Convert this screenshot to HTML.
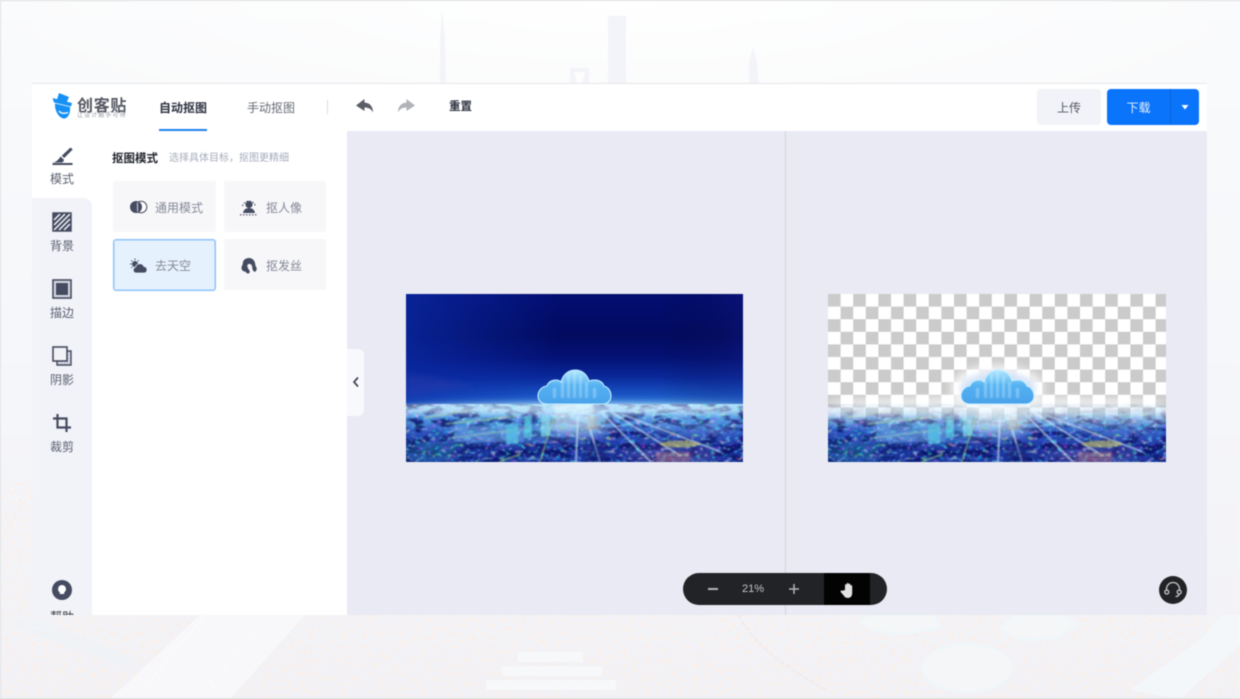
<!DOCTYPE html>
<html lang="zh-CN">
<head>
<meta charset="utf-8">
<title>创客贴 抠图</title>
<style>
*{box-sizing:border-box;margin:0;padding:0}
html,body{width:1240px;height:699px;overflow:hidden;background:#f8f8fb}
body{font-family:"Liberation Sans","Noto Sans CJK SC",sans-serif;position:relative}
#wrap{position:absolute;left:0;top:0;width:1240px;height:699px;filter:blur(.45px);overflow:hidden}
.a{position:absolute}
.t{position:absolute;white-space:nowrap;line-height:16px}
svg{position:absolute;overflow:visible}
svg.img{overflow:hidden}
#app{position:absolute;left:32px;top:84px;width:1175px;height:531px;overflow:hidden;background:#e9eaf3}
.lab{position:absolute;left:0;width:60px;text-align:center;font-size:12px;line-height:16px;color:#5a5f70}
.card{position:absolute;background:#f7f7fa;border-radius:2px}
.card span{position:absolute;left:42px;top:19px;font-size:12px;line-height:16px;color:#858998;white-space:nowrap}
</style>
</head>
<body>
<div id="wrap">

<!-- page background -->
<svg style="left:0;top:0" width="1240" height="699" viewBox="0 0 1240 699">
  <defs>
    <linearGradient id="bgv" x1="0" y1="0" x2="0" y2="1">
      <stop offset="0" stop-color="#fafbfc"/><stop offset=".5" stop-color="#f6f7fa"/><stop offset="1" stop-color="#f2f2f6"/>
    </linearGradient>
    <radialGradient id="bgc" cx=".5" cy="0" r=".55">
      <stop offset="0" stop-color="#ffffff"/><stop offset="1" stop-color="#ffffff" stop-opacity="0"/>
    </radialGradient>
    <filter id="sp" x="0" y="0" width="100%" height="100%" color-interpolation-filters="sRGB">
      <feTurbulence type="fractalNoise" baseFrequency=".22" numOctaves="2" seed="5"/>
      <feColorMatrix values="0 0 0 0 1  0 0 0 0 .93  0 0 0 0 .88  0 0 0 9 -4.9"/>
    </filter>
  </defs>
  <rect width="1240" height="699" fill="url(#bgv)"/>
  <rect width="1240" height="250" fill="url(#bgc)"/>
  <rect x="0" y="615" width="1240" height="84" filter="url(#sp)" opacity=".5"/>
  <rect x="0" y="480" width="32" height="135" filter="url(#sp)" opacity=".5"/>
  <g fill="#f3f4f9">
    <path d="M440 84V40l2-30 3 30 1 44z"/>
    <rect x="608" y="16" width="18" height="68"/>
    <path d="M570 68h19v16h-19z"/>
    <path d="M749 84V62l4-15 4 15 2 22z"/>
  </g>
  <path d="M574 72h11l-3 12h-5z" fill="#fdfdfe"/>
  <g fill="#f8f8fa">
    <path d="M110 699l90-84h105l-75 84z"/>
  </g>
  <path d="M30 615l110 46-20 6L10 625z" fill="#eef2f7" opacity=".7"/>
  <g fill="none" stroke="#fbfbfc" stroke-width="1.5">
    <path d="M147 685l58-70"/>
    <path d="M235 645a8 8 0 0 0 9 8M225 665a8 8 0 0 0 9 8M210 680a8 8 0 0 0 9 8M250 628a8 8 0 0 0 9 8"/>
  </g>
  <g fill="#f7f8fa">
    <rect x="518" y="652" width="65" height="10"/>
    <rect x="502" y="666" width="100" height="10"/>
    <rect x="486" y="680" width="130" height="10"/>
  </g>
  <g fill="#f4f6f8" stroke="#eef7fa" stroke-width="2">
    <path d="M859 622c14 14 60 14 83 4l-8-11h-66z"/>
    <path d="M1001 628c10 14 55 18 75-3l-12-10h-50z"/>
    <ellipse cx="967" cy="668" rx="45" ry="24"/>
  </g>
  <path d="M738 615c20 36 55 56 90 76" fill="none" stroke="#f2e9ea" stroke-width="2" stroke-dasharray="5 2"/>
  <path d="M1130 690l70-50 22-25h18v30l-60 54z" fill="#f4f7f9"/>
  <rect x="0" y="0" width="1240" height="1" fill="#dcdde0"/>
  <rect x="0" y="0" width="1" height="699" fill="#dfe0e3"/>
  <rect x="0" y="698" width="1240" height="1" fill="#d9dadd"/>
  <rect x="32" y="83" width="1175" height="1" fill="#e6e7e9"/>
</svg>

<!-- shared artwork defs -->
<svg width="0" height="0" style="left:0;top:0">
  <defs>
    <linearGradient id="sky" x1="0" y1="0" x2="0" y2="1">
      <stop offset="0" stop-color="#030e72"/><stop offset=".25" stop-color="#020b60"/>
      <stop offset=".38" stop-color="#041276"/><stop offset=".5" stop-color="#0a2a9c"/>
      <stop offset=".6" stop-color="#1a55c4"/><stop offset=".68" stop-color="#4a9ae6"/>
      <stop offset="1" stop-color="#4a9ae6"/>
    </linearGradient>
    <linearGradient id="skyL" x1="0" y1="0" x2="1" y2="0">
      <stop offset="0" stop-color="#0b2ca8" stop-opacity=".7"/><stop offset=".45" stop-color="#0b2ca8" stop-opacity="0"/>
      <stop offset=".75" stop-color="#000" stop-opacity="0"/><stop offset="1" stop-color="#1a1f88" stop-opacity=".25"/>
    </linearGradient>
    <linearGradient id="ground" x1="0" y1="0" x2="0" y2="1">
      <stop offset="0" stop-color="#a8dcf8"/><stop offset=".22" stop-color="#5a9fe6"/>
      <stop offset=".5" stop-color="#2a50bc"/><stop offset=".8" stop-color="#1a2f98"/><stop offset="1" stop-color="#1c3aa0"/>
    </linearGradient>
    <linearGradient id="cl" x1="0" y1="0" x2="0" y2="1">
      <stop offset="0" stop-color="#b5eaff"/><stop offset=".45" stop-color="#55b2f2"/><stop offset="1" stop-color="#4aa2ea"/>
    </linearGradient>
    <linearGradient id="beam" x1="0" y1="0" x2="0" y2="1">
      <stop offset="0" stop-color="#e8fbff" stop-opacity=".85"/><stop offset="1" stop-color="#bfeaff" stop-opacity="0"/>
    </linearGradient>
    <linearGradient id="fade" x1="0" y1="0" x2="0" y2="1">
      <stop offset=".66" stop-color="#fff" stop-opacity=".15"/><stop offset=".72" stop-color="#fff" stop-opacity=".5"/>
      <stop offset=".8" stop-color="#fff" stop-opacity="1"/><stop offset="1" stop-color="#fff"/>
    </linearGradient>
    <mask id="mf" maskUnits="userSpaceOnUse" x="0" y="0" width="338" height="168">
      <rect width="338" height="168" fill="url(#fade)"/>
    </mask>
    <filter id="noise1" x="0" y="110" width="338" height="58" filterUnits="userSpaceOnUse" color-interpolation-filters="sRGB">
      <feTurbulence type="fractalNoise" baseFrequency=".2 .3" numOctaves="2" seed="11"/>
      <feColorMatrix values="2.400 0 0 0 -.7  0 2.600 0 0 -.55  0 0 2.200 0 -.1  0 0 0 6 -3"/>
      <feGaussianBlur stdDeviation=".6"/>
    </filter>
    <filter id="noise2" x="0" y="110" width="338" height="58" filterUnits="userSpaceOnUse" color-interpolation-filters="sRGB">
      <feTurbulence type="fractalNoise" baseFrequency=".06 .16" numOctaves="2" seed="3"/>
      <feColorMatrix values="0 0 0 0 .03  0 0 0 0 .06  0 0 0 0 .4  0 0 0 8 -3.800"/>
      <feGaussianBlur stdDeviation=".6"/>
    </filter>
    <filter id="b1" x="-50%" y="-150%" width="200%" height="400%"><feGaussianBlur stdDeviation="3"/></filter>
    <filter id="b2" x="-50%" y="-50%" width="200%" height="200%"><feGaussianBlur stdDeviation="5"/></filter>
    <filter id="b3" x="-20%" y="-20%" width="140%" height="140%"><feGaussianBlur stdDeviation=".7"/></filter>
    <filter id="b4" x="-30%" y="-30%" width="160%" height="160%"><feGaussianBlur stdDeviation="1.500"/></filter>
    <filter id="b5" x="-30%" y="-50%" width="160%" height="200%"><feGaussianBlur stdDeviation="6"/></filter>

    <g id="city">
      <rect x="0" y="110" width="338" height="58" fill="url(#ground)"/>
      <rect x="0" y="110" width="338" height="58" filter="url(#noise2)" opacity=".8"/>
      <g filter="url(#b5)">
        <ellipse cx="95" cy="138" rx="55" ry="8" fill="#58d0e8" opacity=".5"/>
        <ellipse cx="25" cy="158" rx="30" ry="8" fill="#2fa0a8" opacity=".45"/>
        <ellipse cx="170" cy="130" rx="35" ry="12" fill="#d5f4ff" opacity=".6"/>
        <ellipse cx="290" cy="133" rx="45" ry="7" fill="#8cc5f0" opacity=".35"/>
        <ellipse cx="265" cy="162" rx="45" ry="6" fill="#8a6ab0" opacity=".45"/>
      </g>
      <rect x="0" y="110" width="338" height="58" filter="url(#noise1)" opacity=".5"/>
      <g stroke="#d8f2ff" fill="none" filter="url(#b3)">
        <path d="M172 122l-2 46M180 122l14 46" stroke-width="2" opacity=".65"/>
        <path d="M195 118l50 50M205 118l70 44M215 120l100 38" stroke-width="2" opacity=".6"/>
        <path d="M148 122l-14 46" stroke="#a8e078" stroke-width="1.200" opacity=".7"/>
        <path d="M115 160l-22 8" stroke="#a8e078" stroke-width="1.200" opacity=".7"/>
      </g>
      <g filter="url(#b3)">
        <path d="M18 124l48-8M40 130l70-8M45 144l80-10" stroke="#c2e47c" stroke-width="1.200" opacity=".6" fill="none"/>
        <rect x="48" y="132" width="70" height="16" fill="#7aa6ee" opacity=".4"/>
        <rect x="118" y="122" width="8" height="22" fill="#63d6ee" opacity=".65"/>
        <rect x="135" y="122" width="9" height="20" fill="#7fe0ee" opacity=".65"/>
        <rect x="100" y="130" width="12" height="20" fill="#55c9ea" opacity=".65"/>
        <ellipse cx="274" cy="150" rx="20" ry="3.500" fill="#d9d65c" opacity=".55"/>
        <rect x="178" y="150" width="24" height="18" fill="#10207a" opacity=".45"/>
        <rect x="250" y="158" width="34" height="10" fill="#d07a70" opacity=".35"/>
        <rect x="180" y="122" width="12" height="14" fill="#a8a8a8" opacity=".55"/>
      </g>
      <ellipse cx="168" cy="115" rx="185" ry="6" fill="#d0f0ff" opacity=".7" filter="url(#b1)"/>
      <rect x="148" y="108" width="40" height="32" fill="url(#beam)" filter="url(#b4)"/>
    </g>

    <g id="cloud">
      <path d="M141 110C134 110 132 105 132 102C132 96 137 92 141 92C142 88 146 86 150 86C152 86 154 87 155 88C157 80 163 76 169 76C176 76 181 80 183 87C185 86 187 86 189 86C194 86 197 89 198 92C202 93 205 97 205 102C205 106 202 110 197 110Z" fill="url(#cl)" stroke="#c4eeff" stroke-width="1.100"/>
      <g fill="#d5f3ff" opacity=".35" filter="url(#b3)">
        <rect x="155" y="86" width="3" height="18"/><rect x="161" y="80" width="3" height="24"/>
        <rect x="167" y="78" width="3" height="26"/><rect x="173" y="82" width="3" height="22"/>
        <rect x="179" y="88" width="3" height="16"/><rect x="147" y="94" width="3" height="10"/>
        <rect x="187" y="94" width="3" height="10"/>
      </g>
      <path d="M139 109.500h60" stroke="#ffffff" stroke-width="1.500" filter="url(#b3)"/>
    </g>
  </defs>
</svg>

<!-- app -->
<div id="app">
  <!-- canvas divider -->
  <div class="a" style="left:753px;top:47px;width:1px;height:484px;background:#d3d4de"></div>

  <!-- top bar -->
  <div class="a" style="left:0;top:0;width:1175px;height:47px;background:#fff"></div>

  <!-- logo -->
  <svg style="left:19px;top:8px" width="24" height="30" viewBox="0 0 24 30">
    <g fill="#1790f5">
      <path d="M8 1L18 5 14.500 13 5.500 9z"/>
      <path d="M1.500 6L21 11 20 14.500 3 10.500z"/>
      <path d="M4 11.500l15 3.500c.5 5-1 10-5 11.500C8.500 27 3.500 19.500 4 11.500z"/>
    </g>
    <path d="M8 19c2 2.500 5 3 9 1.500" stroke="#fff" stroke-width="1.400" fill="none"/>
  </svg>
  <div class="t" style="left:45px;top:12px;font-size:16px;line-height:22px;color:#555862;font-weight:700;letter-spacing:.7px">创客贴</div>
  <div class="t" style="left:45px;top:28px;font-size:6px;line-height:8px;color:#9a9ea8;letter-spacing:1.100px">让设计触手可得</div>

  <div class="t" style="left:127px;top:16px;font-size:12px;color:#2c3040;font-weight:700">自动抠图</div>
  <div class="a" style="left:127px;top:45px;width:48px;height:2px;background:#2081ee"></div>
  <div class="t" style="left:215px;top:16px;font-size:12px;color:#666a76">手动抠图</div>
  <div class="a" style="left:295px;top:16px;width:1px;height:14px;background:#dcdde2"></div>

  <svg style="left:323px;top:14px" width="19" height="17" viewBox="0 0 19 17">
    <path d="M9.500 1L1 7.500l8.500 5.500V9.500c3.500 0 6.500 1 8.500 5 0-6-3-9.500-8.500-10z" fill="#5b5e66"/>
  </svg>
  <svg style="left:365px;top:14px" width="19" height="17" viewBox="0 0 19 17">
    <path d="M9.500 1L18 7.500 9.500 13V9.500c-3.500 0-6.500 1-8.500 5 0-6 3-9.500 8.500-10z" fill="#b1b3b8"/>
  </svg>
  <div class="t" style="left:417px;top:15px;font-size:11.500px;color:#2c3040;font-weight:700">重置</div>

  <div class="a" style="left:1005px;top:5px;width:64px;height:36px;background:#f2f3f8;border-radius:4px"></div>
  <div class="t" style="left:1005px;top:16px;width:64px;text-align:center;font-size:12px;color:#555966">上传</div>
  <div class="a" style="left:1075px;top:5px;width:92px;height:36px;background:#0a74fb;border-radius:4px"></div>
  <div class="a" style="left:1138px;top:5px;width:1px;height:36px;background:#0a66dc"></div>
  <div class="t" style="left:1075px;top:16px;width:63px;text-align:center;font-size:12px;color:#e4f0ff">下载</div>
  <svg style="left:1149px;top:20px" width="8" height="6" viewBox="0 0 8 6"><path d="M.5 1h7L4 5.500z" fill="#fff"/></svg>

  <!-- sidebar -->
  <div class="a" style="left:0;top:47px;width:60px;height:484px;background:#fff"></div>
  <div class="a" style="left:0;top:114px;width:60px;height:417px;background:#f2f3f8;border-top-right-radius:8px"></div>

  <svg style="left:19px;top:62px" width="24" height="22" viewBox="0 0 24 22">
    <path d="M19.500 1.500l2.200 2-8.500 8.500-2.400-2.300z" fill="#454b60"/>
    <path d="M9.500 10.500l3.500 3.300c-.4 1.800-1 2.700-2.500 2.700H2.500c3-1 5.200-2.800 7-6z" fill="#454b60"/>
    <rect x="1.500" y="17" width="20" height="2" fill="#454b60"/>
  </svg>
  <div class="lab" style="top:87px">模式</div>

  <svg style="left:20px;top:128px" width="20" height="20" viewBox="0 0 20 20">
    <rect x="1" y="1" width="18" height="18" fill="#454b60"/>
    <g stroke="#f2f3f8" stroke-width="1.500">
      <path d="M2 8L8 2M2 13L13 2M2 18L18 2M7 18L18 7M12 18l6-6"/>
    </g>
    <rect x="1" y="1" width="18" height="18" fill="none" stroke="#454b60" stroke-width="1.500"/>
  </svg>
  <div class="lab" style="top:154px">背景</div>

  <svg style="left:20px;top:195px" width="20" height="20" viewBox="0 0 20 20">
    <rect x="1" y="1" width="18" height="18" fill="#d5d7e0" stroke="#454b60" stroke-width="1.600"/>
    <rect x="4" y="4" width="12" height="12" fill="#454b60"/>
  </svg>
  <div class="lab" style="top:221px">描边</div>

  <svg style="left:20px;top:262px" width="20" height="20" viewBox="0 0 20 20">
    <path d="M15 5h4v14H5v-4" fill="#c9ccd6" stroke="#454b60" stroke-width="1.400"/>
    <path d="M17 7v10H7" fill="none" stroke="#f2f3f8" stroke-width="1" stroke-dasharray="1.500 1.500"/>
    <rect x="1" y="1" width="14" height="14" fill="#f2f3f8" stroke="#454b60" stroke-width="1.600"/>
  </svg>
  <div class="lab" style="top:288px">阴影</div>

  <svg style="left:20px;top:329px" width="20" height="20" viewBox="0 0 20 20">
    <path d="M5.500 1v13.500H19" fill="none" stroke="#454b60" stroke-width="2.200"/>
    <path d="M1 5.500h13.500V19" fill="none" stroke="#454b60" stroke-width="2.200"/>
  </svg>
  <div class="lab" style="top:355px">裁剪</div>

  <svg style="left:20px;top:496px" width="20" height="20" viewBox="0 0 20 20">
    <circle cx="10" cy="10" r="10" fill="#454b60"/>
    <path d="M10 5a4 4 0 0 0-2.200 7.300V14h4.400v-1.700A4 4 0 0 0 10 5z" fill="#fff"/>
  </svg>
  <div class="lab" style="top:525px;color:#33363f">帮助</div>

  <!-- panel -->
  <div class="a" style="left:60px;top:47px;width:255px;height:484px;background:#fff"></div>
  <div class="t" style="left:80px;top:67px;font-size:11.500px;color:#22252e;font-weight:700">抠图模式</div>
  <div class="t" style="left:137px;top:67px;font-size:10px;color:#a7acbc">选择具体目标，抠图更精细</div>

  <div class="card" style="left:81px;top:97px;width:103px;height:51px"><span>通用模式</span></div>
  <div class="card" style="left:192px;top:97px;width:102px;height:51px"><span>抠人像</span></div>
  <div class="card" style="left:81px;top:155px;width:103px;height:52px;background:#e6f1fe;border:1px solid #8fc2fb;box-shadow:inset 0 0 0 .5px #8fc2fb;border-radius:3px"><span style="left:41px;top:18px">去天空</span></div>
  <div class="card" style="left:192px;top:155px;width:102px;height:51px"><span>抠发丝</span></div>

  <svg style="left:97px;top:115px" width="20" height="16" viewBox="0 0 20 16">
    <circle cx="12" cy="8" r="5.800" fill="#fff" stroke="#454b60" stroke-width="1"/>
    <circle cx="7" cy="8" r="6" fill="#454b60"/>
    <path d="M8.500 3.500v9" stroke="#f7f7fa" stroke-width=".8"/>
  </svg>
  <svg style="left:207px;top:113px" width="20" height="20" viewBox="0 0 20 20">
    <circle cx="10" cy="7.500" r="3.600" fill="#454b60"/>
    <path d="M4 16c.5-3.200 2.800-5 6-5s5.500 1.800 6 5z" fill="#454b60"/>
    <path d="M3.500 9a6.800 6.800 0 0 1 13 0" fill="none" stroke="#454b60" stroke-width="1.100" stroke-dasharray="1.500 1.500"/>
    <path d="M1 17.800h18" stroke="#454b60" stroke-width="1.100" stroke-dasharray="1.500 1.500"/>
  </svg>
  <svg style="left:97px;top:174px" width="20" height="16" viewBox="0 0 20 16">
    <circle cx="6" cy="6" r="3" fill="#454b60"/>
    <g stroke="#454b60" stroke-width="1"><path d="M6 .5v1.500M1 6h1.500M2.300 2.300l1 1M9.700 2.300l-1 1M2.300 9.700l1-1"/></g>
    <path d="M7 15a3 3 0 0 1-.5-5.900A4.500 4.500 0 0 1 15 8.500 3.300 3.300 0 0 1 15.500 15z" fill="#454b60" stroke="#e6f1fe" stroke-width=".8"/>
  </svg>
  <svg style="left:208px;top:173px" width="18" height="18" viewBox="0 0 18 18">
    <path d="M9 1c-4 0-6.200 2.500-6.200 5.500 0 1.500-1.300 2.500-1.300 4.500 0 2 1.500 3.500 3.500 3.500.7 0 1.300 2 3 2 1.500 0 2.300-1.500 1.400-3C8.500 12 6.800 10 7.500 8c.7-1.700 3.500-1.500 4.300.5.700 1.700.2 3 1 4.500.5 1 1.200 1.800 2.200 1.800 1.700-1 2.200-3.300 1.200-4.800-.8-1.200-.8-1.500-1-3C14.800 3.500 12.500 1 9 1z" fill="#454b60"/>
  </svg>

  <!-- collapse tab -->
  <div class="a" style="left:315px;top:265px;width:17px;height:67px;background:#f8f9fc;border-radius:0 6px 6px 0"></div>
  <svg style="left:320px;top:292px" width="8" height="12" viewBox="0 0 8 12"><path d="M6 1.500L2 6l4 4.500" fill="none" stroke="#3f4454" stroke-width="1.700"/></svg>

  <!-- left image -->
  <svg class="img" style="left:374px;top:210px" width="337" height="168" viewBox="0 0 337 168">
    <rect width="337" height="168" fill="url(#sky)"/>
    <rect width="337" height="116" fill="url(#skyL)"/>
    <path d="M0 80c30 2 50 8 70 12l-70 10z" fill="#3b3fa8" opacity=".3" filter="url(#b1)"/>
    <use href="#city"/>
    <use href="#cloud"/>
  </svg>

  <!-- right image -->
  <svg class="img" style="left:796px;top:210px" width="338" height="168" viewBox="0 0 338 168">
    <defs>
      <pattern id="chk" width="25.200" height="25.200" patternUnits="userSpaceOnUse">
        <rect width="25.200" height="25.200" fill="#fff"/>
        <rect width="12.600" height="12.600" fill="#cbcbcb"/>
        <rect x="12.600" y="12.600" width="12.600" height="12.600" fill="#cbcbcb"/>
      </pattern>
    </defs>
    <rect width="338" height="168" fill="url(#chk)"/>
    <ellipse cx="169" cy="94" rx="46" ry="22" fill="#fff" opacity=".95" filter="url(#b2)"/>
    <ellipse cx="168" cy="108" rx="170" ry="6" fill="#fff" opacity=".55" filter="url(#b1)"/>
    <g mask="url(#mf)"><use href="#city"/></g>
    <ellipse cx="170" cy="94" rx="38" ry="16" fill="#7fa8e8" opacity=".3" filter="url(#b1)"/>
    <g transform="translate(1 0)"><use href="#cloud"/></g>
  </svg>

  <!-- zoom pill -->
  <div class="a" style="left:651px;top:489px;width:204px;height:32px;background:#222326;border-radius:16px;overflow:hidden">
    <div class="a" style="left:141px;top:0;width:46px;height:32px;background:#030303"></div>
  </div>
  <div class="a" style="left:676px;top:504px;width:10px;height:2px;background:#b5b5b5"></div>
  <div class="t" style="left:701px;top:497px;width:40px;text-align:center;font-size:11px;color:#c4c4c4">21%</div>
  <svg style="left:756px;top:499px" width="12" height="12" viewBox="0 0 12 12"><path d="M6 1v10M1 6h10" stroke="#b5b5b5" stroke-width="1.500"/></svg>
  <svg style="left:807px;top:497px" width="18" height="18" viewBox="0 0 18 18">
    <path d="M6 9V4a.9.900 0 0 1 1.800 0V2.800a.9.900 0 0 1 1.800 0V3.500a.9.900 0 0 1 1.800 0V5a.9.900 0 0 1 1.800 0v7c0 3-1.700 5-4.300 5-2.300 0-3.300-1-4.400-2.700L1.700 11c-.6-1 .6-2 1.500-1.300z" fill="#e2e2e2"/>
  </svg>

  <!-- support -->
  <svg style="left:1127px;top:492px" width="28" height="28" viewBox="0 0 28 28">
    <circle cx="14" cy="14" r="14" fill="#222326"/>
    <path d="M7.500 15v-2a6.500 6.500 0 0 1 13 0v2" fill="none" stroke="#c9c9c9" stroke-width="1.300"/>
    <circle cx="7.800" cy="16" r="2" fill="none" stroke="#c9c9c9" stroke-width="1.300"/>
    <circle cx="20.200" cy="16" r="2" fill="none" stroke="#c9c9c9" stroke-width="1.300"/>
    <path d="M20 18.500c-.5 1.500-1.800 2-3.500 2" fill="none" stroke="#c9c9c9" stroke-width="1.300"/>
  </svg>
</div>

</div>
</body>
</html>
